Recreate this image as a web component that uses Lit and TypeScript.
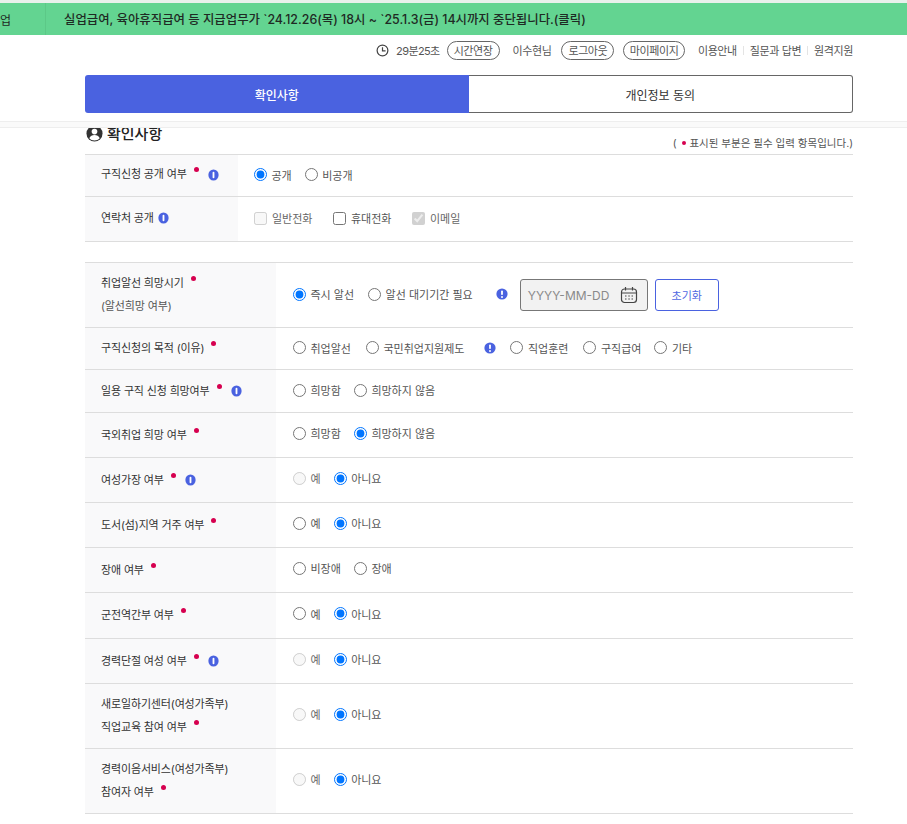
import { LitElement, html, css, nothing } from "lit";
import { customElement } from "lit/decorators.js";

type Opt = { label: string; checked?: boolean; disabled?: boolean; infoBefore?: boolean; wide?: boolean };
type Row = { lines: string[]; info?: boolean; opts: Opt[]; h: number };

const yn = (firstDisabled = false): Opt[] => [
  { label: "예", disabled: firstDisabled },
  { label: "아니요", checked: true },
];

const rows: Row[] = [
  { lines: ["구직신청의 목적 (이유)"], h: 42, opts: [
    { label: "취업알선", wide: true }, { label: "국민취업지원제도" }, { label: "직업훈련", infoBefore: true, wide: true }, { label: "구직급여" }, { label: "기타" },
  ] },
  { lines: ["일용 구직 신청 희망여부"], info: true, h: 43, opts: [{ label: "희망함" }, { label: "희망하지 않음" }] },
  { lines: ["국외취업 희망 여부"], h: 45, opts: [{ label: "희망함" }, { label: "희망하지 않음", checked: true }] },
  { lines: ["여성가장 여부"], info: true, h: 45, opts: yn(true) },
  { lines: ["도서(섬)지역 거주 여부"], h: 45, opts: yn() },
  { lines: ["장애 여부"], h: 45, opts: [{ label: "비장애" }, { label: "장애" }] },
  { lines: ["군전역간부 여부"], h: 46, opts: yn() },
  { lines: ["경력단절 여성 여부"], info: true, h: 45, opts: yn(true) },
  { lines: ["새로일하기센터(여성가족부)", "직업교육 참여 여부"], h: 65, opts: yn(true) },
  { lines: ["경력이음서비스(여성가족부)", "참여자 여부"], h: 65, opts: yn(true) },
];

// label hints have a solid bar, the ones beside the options read as "!"
const infoIcon = html`<svg class="info" viewBox="0 0 12 12" preserveAspectRatio="none"><circle cx="6" cy="6" r="5.600" fill="#4a62e0"/><rect x="5" y="2.800" width="2" height="6.400" rx="1" fill="#fff"/></svg>`;
const warnIcon = html`<svg class="warn" viewBox="0 0 12 12"><circle cx="6" cy="6" r="5.600" fill="#4a62e0"/><rect x="5.100" y="2.500" width="1.800" height="4.600" rx=".8" fill="#fff"/><circle cx="6" cy="8.900" r="1" fill="#fff"/></svg>`;
const dot = html`<i class="dot"></i>`;

@customElement("app-root")
export class AppRoot extends LitElement {
  static styles = css`
    :host {
      display: block;
      font-family: Inter, "Noto Sans CJK KR", "Noto Sans", sans-serif;
      font-size: 11px;
      color: #333;
      background: #fff;
      padding-bottom: 11px;
    }
    .banner {
      display: flex;
      height: 32px;
      margin-top: 3px;
      background: #63d491;
      align-items: center;
      color: #1f2a24;
      box-shadow: 0 -3px 0 #e9f1ec;
    }
    .banner .prev {
      width: 45px;
      height: 100%;
      flex: none;
      display: flex;
      align-items: center;
      border-right: 1px solid #5cc887;
      font-size: 12px;
      overflow: hidden;
    }
    .banner .msg {
      margin-left: 18px;
      padding-bottom: 1px;
      font-size: 12.4px;
      font-weight: 500;
    }
    .util {
      display: flex;
      justify-content: flex-end;
      align-items: center;
      height: 30px;
      padding: 0 54px 0 0;
      color: #555;
      letter-spacing: -0.4px;
    }
    .util svg { width: 13px; height: 13px; margin-right: 7px; }
    .util .time { letter-spacing: -0.6px; }
    .util .pill {
      height: 19px;
      box-sizing: border-box;
      border: 1px solid #666;
      border-radius: 10px;
      padding: 0 6px;
      display: flex;
      align-items: center;
    }
    .util .name { margin-left: 13px; }
    .util .pill.first { margin-left: 7px; }
    .util .pill.log { margin-left: 10px; }
    .util .pill.my { margin-left: 9px; padding: 0 5.5px; }
    .util .link { margin-left: 13px; }
    .util .sep { width: 1px; height: 9px; background: #e4e4e4; margin: 0 -7px 0 6px; }
    .tabs {
      display: flex;
      margin: 10px 54px 0 85px;
      height: 38px;
      font-size: 12px;
    }
    .tabs div {
      flex: 1;
      display: flex;
      align-items: center;
      justify-content: center;
      box-sizing: border-box;
    }
    .tabs .on {
      background: #4a62e0;
      color: #fff;
      font-weight: 500;
      border-radius: 3px 0 0 3px;
    }
    .tabs .off {
      border: 1px solid #666;
      border-left: 0;
      border-radius: 0 3px 3px 0;
    }
    .band {
      margin-top: 8px;
      height: 7px;
      box-sizing: border-box;
      background: #fafafa;
      border-top: 1px solid #eee;
      border-bottom: 1px solid #eee;
    }
    .main { padding: 0 54px 0 85px; }
    .head {
      display: flex;
      justify-content: space-between;
      height: 26px;
      overflow: hidden;
    }
    .title {
      display: flex;
      align-items: center;
      margin-top: -7px;
      height: 22px;
      font-size: 15px;
      font-weight: 500;
      color: #222;
      gap: 4px;
    }
    .title svg { width: 17px; height: 17px; margin: 2px 0 0 1px; }
    .note {
      margin-top: 8px;
      font-size: 10.5px;
      line-height: 16px;
      color: #555;
    }
    .note i {
      display: inline-block;
      width: 4px;
      height: 4px;
      border-radius: 50%;
      background: #d6004f;
      margin: 0 3px 2px 3px;
    }
    .table { border-top: 1px solid #ddd; }
    .row {
      display: flex;
      border-bottom: 1px solid #ddd;
      box-sizing: border-box;
    }
    .label {
      flex: none;
      width: 191px;
      box-sizing: border-box;
      padding: 0 0 0 16px;
      background: #f9f9fa;
      display: flex;
      flex-direction: column;
      justify-content: center;
      line-height: 23px;
      letter-spacing: -0.15px;
    }
    .t1 .label { width: 153px; padding-bottom: 2px; }
    .label .line { display: flex; align-items: center; }
    .label .sub { color: #555; }
    .dot {
      width: 5px;
      height: 5px;
      border-radius: 50%;
      background: #d6004f;
      margin: 0 0 10px 7px;
      flex: none;
    }
    .info { width: 11px; height: 12px; flex: none; margin-left: 4px; }
    .dot + .info { margin-left: 9px; }
    .warn { width: 12px; height: 12px; flex: none; margin: 0 14px 0 7px; }
    .cell {
      flex: 1;
      display: flex;
      align-items: center;
      padding: 0 0 2px 17px;
      color: #555;
    }
    .cell.low { padding-bottom: 4px; }
    .t1 .cell { padding-left: 16px; }
    .opt { display: flex; align-items: center; margin-right: 13px; }
    .opt.near { margin-right: 14px; }
    .opt.wide { margin-right: 15px; }
    .opt.wider { margin-right: 16px; }
    .opt.check { margin-right: 20.5px; }
    .opt input { margin: 0 4.5px 0 0; width: 13px; height: 13px; flex: none; }
    .opt.check input { margin-right: 5px; }
    .opt.disabled span { color: #666; }
    .date {
      margin: 2px 0 0 -2px;
      width: 128px;
      height: 32px;
      box-sizing: border-box;
      border: 1px solid #777;
      border-radius: 3px;
      background: #f2f2f2;
      display: flex;
      align-items: center;
      justify-content: space-between;
      padding: 0 9px 0 7px;
      color: #8a8a8a;
      font-size: 12px;
    }
    .date svg { width: 18px; height: 18px; }
    .reset {
      margin: 2px 0 0 7px;
      width: 64px;
      height: 32px;
      box-sizing: border-box;
      border: 1px solid #4a62e0;
      border-radius: 3px;
      color: #5068e2;
      display: flex;
      align-items: center;
      justify-content: center;
    }
    .gap { height: 20px; }
  `;

  private opt(o: Opt, name: string, extra = "") {
    return html`${o.infoBefore ? warnIcon : nothing}<label class="opt ${o.disabled ? "disabled" : ""} ${o.wide ? "wide" : ""} ${extra}"><input type="radio" name=${name} ?checked=${!!o.checked} ?disabled=${!!o.disabled} /><span>${o.label}</span></label>`;
  }

  render() {
    return html`
      <div class="banner">
        <div class="prev">업</div>
        <div class="msg">실업급여, 육아휴직급여 등 지급업무가 \`24.12.26(목) 18시 ~ \`25.1.3(금) 14시까지 중단됩니다.(클릭)</div>
      </div>
      <div class="util">
        <svg viewBox="0 0 14 14" fill="none" stroke="#444" stroke-width="1.300"><circle cx="7" cy="7" r="5.800"/><path d="M7 3.500V7.300H10.300"/></svg>
        <span class="time">29분25초</span>
        <span class="pill first">시간연장</span>
        <span class="name">이수현님</span>
        <span class="pill log">로그아웃</span>
        <span class="pill my">마이페이지</span>
        <span class="link">이용안내</span><i class="sep"></i>
        <span class="link">질문과 답변</span><i class="sep"></i>
        <span class="link">원격지원</span>
      </div>
      <div class="tabs">
        <div class="on">확인사항</div>
        <div class="off">개인정보 동의</div>
      </div>
      <div class="band"></div>
      <div class="main">
        <div class="head">
          <div class="title">
            <svg viewBox="0 0 18 18"><circle cx="9" cy="9" r="8.500" fill="#333"/><circle cx="9" cy="7" r="3" fill="#fff"/><path d="M3.500 14c1-2.600 3-3.500 5.500-3.500s4.500.9 5.500 3.500c-1.400 1.500-3.400 2.400-5.500 2.400s-4.100-.9-5.500-2.400z" fill="#fff"/></svg>
            확인사항
          </div>
          <div class="note">( <i></i>표시된 부분은 필수 입력 항목입니다.)</div>
        </div>
        <div class="table t1">
          <div class="row" style="height:42px">
            <div class="label"><div class="line">구직신청 공개 여부${dot}${infoIcon}</div></div>
            <div class="cell">
              ${this.opt({ label: "공개", checked: true }, "open")}
              ${this.opt({ label: "비공개" }, "open")}
            </div>
          </div>
          <div class="row" style="height:45px">
            <div class="label"><div class="line">연락처 공개${infoIcon}</div></div>
            <div class="cell">
              <label class="opt check disabled"><input type="checkbox" disabled /><span>일반전화</span></label>
              <label class="opt check"><input type="checkbox" /><span>휴대전화</span></label>
              <label class="opt check disabled"><input type="checkbox" disabled checked /><span>이메일</span></label>
            </div>
          </div>
        </div>
        <div class="gap"></div>
        <div class="table">
          <div class="row" style="height:65px">
            <div class="label">
              <div class="line">취업알선 희망시기${dot}</div>
              <div class="sub">(알선희망 여부)</div>
            </div>
            <div class="cell">
              ${this.opt({ label: "즉시 알선", checked: true }, "when", "near")}
              ${this.opt({ label: "알선 대기기간 필요" }, "when", "wider")}
              ${warnIcon}
              <div class="date">YYYY-MM-DD
                <svg viewBox="0 0 18 18" fill="none" stroke="#444" stroke-width="1.200"><rect x="1.500" y="3" width="15" height="13.500" rx="3"/><path d="M1.500 7H16.500M5.500 1V4.500M12.500 1V4.500"/><path d="M5 10h1.500M8.300 10h1.500M11.500 10h1.500M5 13h1.500M8.300 13h1.500M11.500 13h1.500" stroke-width="1"/></svg>
              </div>
              <div class="reset">초기화</div>
            </div>
          </div>
          ${rows.map(
            (r, i) => html`
              <div class="row" style="height:${r.h}px">
                <div class="label">
                  ${r.lines.map(
                    (l, j) => html`<div class="line">${l}${j === r.lines.length - 1 ? dot : nothing}${j === r.lines.length - 1 && r.info ? infoIcon : nothing}</div>`
                  )}
                </div>
                <div class="cell ${i > 1 ? "low" : ""}">${r.opts.map((o) => this.opt(o, "r" + i))}</div>
              </div>
            `
          )}
        </div>
      </div>
    `;
  }
}

declare global {
  interface HTMLElementTagNameMap {
    "app-root": AppRoot;
  }
}
